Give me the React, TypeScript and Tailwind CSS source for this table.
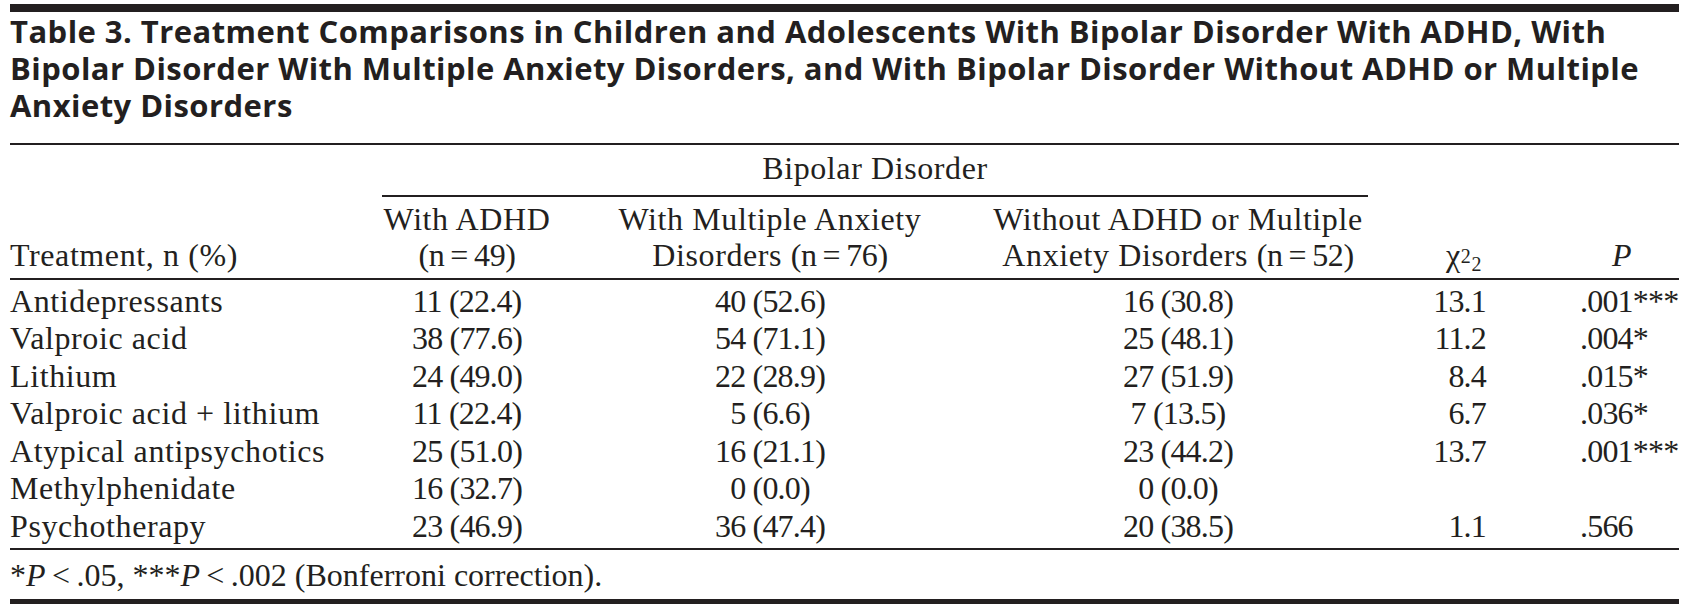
import React from "react";

type Row = {
  name: string;
  adhd: string;
  anxiety: string;
  without: string;
  chi: string;
  p: string;
};

const rows: Row[] = [
  { name: "Antidepressants", adhd: "11 (22.4)", anxiety: "40 (52.6)", without: "16 (30.8)", chi: "13.1", p: ".001***" },
  { name: "Valproic acid", adhd: "38 (77.6)", anxiety: "54 (71.1)", without: "25 (48.1)", chi: "11.2", p: ".004*" },
  { name: "Lithium", adhd: "24 (49.0)", anxiety: "22 (28.9)", without: "27 (51.9)", chi: "8.4", p: ".015*" },
  { name: "Valproic acid + lithium", adhd: "11 (22.4)", anxiety: "5 (6.6)", without: "7 (13.5)", chi: "6.7", p: ".036*" },
  { name: "Atypical antipsychotics", adhd: "25 (51.0)", anxiety: "16 (21.1)", without: "23 (44.2)", chi: "13.7", p: ".001***" },
  { name: "Methylphenidate", adhd: "16 (32.7)", anxiety: "0 (0.0)", without: "0 (0.0)", chi: "", p: "" },
  { name: "Psychotherapy", adhd: "23 (46.9)", anxiety: "36 (47.4)", without: "20 (38.5)", chi: "1.1", p: ".566" },
];

const grid = "grid grid-cols-[372px_170px_436px_380px_120px_192px]";

export default function App() {
  return (
    <div className="w-[1689px] h-[604px] overflow-hidden bg-white text-[#231f20]">
      <div className="mx-[10px] pt-[4px]">
        <div className="h-[8px] bg-[#231f20]" />

        {/* Title */}
        <h1 className="mt-[1px] font-['Open_Sans',sans-serif] font-bold text-[31px] leading-[37px] tracking-[0.45px] whitespace-nowrap">
          Table 3. Treatment Comparisons in Children and Adolescents With Bipolar Disorder With ADHD, With
          <br />
          Bipolar Disorder With Multiple Anxiety Disorders, and With Bipolar Disorder Without ADHD or Multiple
          <br />
          Anxiety Disorders
        </h1>
        <div className="mt-[19px] h-[2px] bg-[#231f20]" />

        <div className="font-['Liberation_Serif',serif] text-[32px] tracking-[0.6px]">
          {/* Header */}
          <div className={grid}>
            <div />
            <div className="col-span-3 pt-[5px] pb-[7px] leading-[37.5px] text-center border-b-2 border-[#231f20]">
              Bipolar Disorder
            </div>
            <div />
            <div />
          </div>
          <div className={`${grid} items-end leading-[36px] pt-[4px] pb-[5px]`}>
            <div>Treatment, n (%)</div>
            <div className="text-center">
              With ADHD
              <br />
              <span className="tracking-[-0.4px]">(n{"\u2009"}={"\u2009"}49)</span>
            </div>
            <div className="text-center">
              With Multiple Anxiety
              <br />
              Disorders <span className="tracking-[-0.4px]">(n{"\u2009"}={"\u2009"}76)</span>
            </div>
            <div className="text-center">
              Without ADHD or Multiple
              <br />
              Anxiety Disorders <span className="tracking-[-0.4px]">(n{"\u2009"}={"\u2009"}52)</span>
            </div>
            <div className="text-right pr-[6px]">
              χ<sup className="text-[20px] relative -top-[3px]">2</sup>
              <sub className="text-[20px]">2</sub>
            </div>
            <div className="pl-[124px] italic">P</div>
          </div>
          <div className="h-[2px] bg-[#231f20]" />

          {/* Body */}
          <div className="pt-[3px] pb-[3px] leading-[37.5px]">
            {rows.map((r) => (
              <div key={r.name} className={grid}>
                <div className="whitespace-nowrap">{r.name}</div>
                <div className="text-center tracking-[-0.8px]">{r.adhd}</div>
                <div className="text-center tracking-[-0.8px]">{r.anxiety}</div>
                <div className="text-center tracking-[-0.8px]">{r.without}</div>
                <div className="text-right pr-[2px] tracking-[-0.8px]">{r.chi}</div>
                <div className="pl-[92px] tracking-[-0.8px]">{r.p}</div>
              </div>
            ))}
          </div>
          <div className="h-[2px] bg-[#231f20]" />

          {/* Footnote */}
          <div className="pt-[7px] pb-[4px] leading-[37.5px] tracking-normal whitespace-nowrap">
            *<i>P</i>
            {"\u2009"}&lt;{"\u2009"}.05, ***<i>P</i>
            {"\u2009"}&lt;{"\u2009"}.002 (Bonferroni correction).
          </div>
          <div className="h-[6px] bg-[#231f20]" />
        </div>
      </div>
    </div>
  );
}
